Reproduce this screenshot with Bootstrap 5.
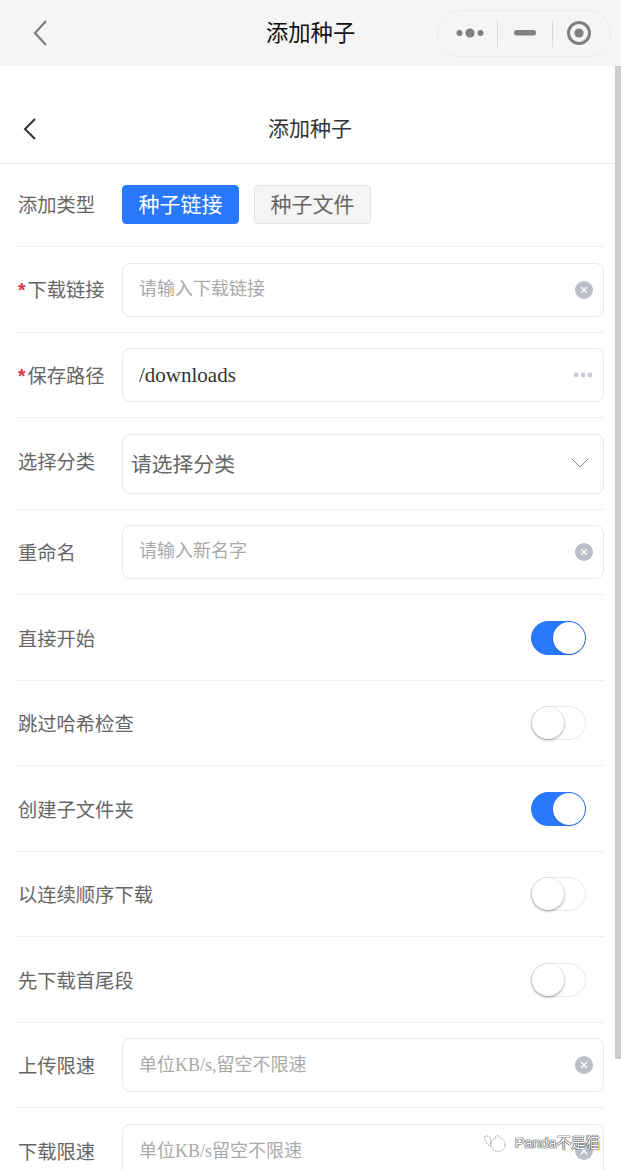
<!DOCTYPE html>
<html lang="zh-CN">
<head>
  <meta charset="UTF-8" />
  <meta name="viewport" content="width=device-width, initial-scale=1" />
  <title>添加种子</title>
  <link href="https://cdn.jsdelivr.net/npm/bootstrap@5.3.0/dist/css/bootstrap.min.css" rel="stylesheet" />
  <style>
    html, body {
      height: 1170px;
      overflow: hidden;
    }
    body {
      font-family: "Liberation Serif", "Noto Sans CJK SC", serif;
      background: #fff;
      position: relative;
    }
    .wx-bar {
      height: 66px;
      background: #f5f5f5;
      padding: 0 10px 0 32px;
    }
    .wx-title {
      font-family: "Noto Sans CJK SC", sans-serif;
      font-size: 22.3px;
      color: #111;
      margin-left: 218px;
      margin-top: -2px;
    }
    .wx-capsule {
      width: 174px;
      height: 47px;
      border: 1px solid #ebebeb;
      border-radius: 24px;
    }
    .wx-cell {
      height: 100%;
    }
    .wx-cell-more {
      width: 59px;
      padding-left: 4px;
    }
    .wx-cell-min {
      width: 54px;
    }
    .wx-cell-close {
      flex: 1 1 0;
      padding-right: 5px;
    }
    .wx-sep {
      width: 1px;
      height: 27px;
      background: #d9d9d9;
    }
    .scroll-track {
      width: 6px;
    }
    .scroll-thumb {
      height: 993px;
      background: #cdcdcd;
    }
    .page-nav {
      height: 98px;
      padding: 28px 0 0 22px;
      border-bottom: 1px solid #e8e8e8;
    }
    .page-title {
      font-family: "Noto Sans CJK SC", sans-serif;
      font-size: 21px;
      color: #333;
      margin-left: 230px;
      margin-top: -2px;
    }
    .form-area {
      padding: 0 11px 0 17px;
    }
    .field-row {
      padding: 16px 0;
      border-bottom: 1px solid #efefef;
    }
    .row-85 {
      height: 85px;
    }
    .row-86 {
      height: 86px;
    }
    .row-92 {
      height: 92px;
    }
    .field-label {
      font-family: "Noto Sans CJK SC", sans-serif;
      width: 105px;
      flex: none;
      padding-left: 1px;
      font-size: 19.3px;
      color: #666;
      white-space: nowrap;
    }
    .label-down {
      padding-top: 2px;
    }
    .label-up {
      padding-bottom: 4px;
    }
    .req {
      color: #d9363e;
      font-family: "Liberation Sans", sans-serif;
      font-weight: 700;
      margin-right: 2px;
    }
    .type-row {
      height: 83px;
      padding: 21px 0 0;
    }
    .type-btn {
      font-family: "Noto Sans CJK SC", sans-serif;
      width: 117px;
      height: 39px;
      padding: 0 0 2px;
      font-size: 21px;
      line-height: 35px;
      border-radius: 4px;
      margin-right: 15px;
    }
    .type-on {
      background: #2979ff;
      border-color: #2979ff;
      color: #fff;
    }
    .type-off {
      background: #f5f5f5;
      border-color: #e2e2e6;
      color: #666;
    }
    .text-box {
      height: 54px;
      flex: 1 1 0;
      border: 1px solid #e8e8e8;
      border-radius: 8px;
      padding: 0 10px 0 16px;
    }
    .text-box input {
      border: 0;
      outline: 0;
      flex: 1 1 0;
      min-width: 0;
      padding: 0;
      background: none;
      font-size: 21px;
      color: #333;
    }
    .text-box input::placeholder {
      font-size: 18px;
      color: #a9a9a9;
      opacity: 1;
    }
    .text-box input.input-down {
      padding-top: 2px;
    }
    .text-box input.input-up {
      padding-bottom: 2px;
    }
    .select-box {
      height: 60px;
      padding: 0 14px 0 8px;
      font-family: "Noto Sans CJK SC", sans-serif;
      font-size: 20.8px;
      color: #666;
    }
    .switch-row {
      padding: 0 18px 0 0;
    }
    .toggle {
      width: 55px;
      height: 34px;
      border-radius: 17px;
      position: relative;
      background: #fff;
      border: 1px solid #e8e8e8;
    }
    .toggle::after {
      content: "";
      position: absolute;
      top: 0;
      left: 0;
      width: 32px;
      height: 32px;
      border-radius: 50%;
      background: #fff;
      box-shadow: 0 1px 3px rgba(0, 0, 0, .4);
    }
    .toggle-on {
      background: #2979ff;
      border-color: #2979ff;
    }
    .toggle-on::after {
      left: 21px;
      box-shadow: 0 1px 2px rgba(0, 0, 0, .25);
    }
    .watermark {
      position: absolute;
      left: 483px;
      top: 1132px;
      font-family: "Liberation Sans", "Noto Sans CJK SC", sans-serif;
      font-size: 14.4px;
      line-height: 22px;
      color: #fff;
      text-shadow: 0 0 1px #222, 0 0 1px #222, 0 0 1px #222;
    }
  </style>
</head>
<body>

  <!-- WeChat title bar -->
  <div class="wx-bar d-flex align-items-center">
    <svg width="16" height="28" viewBox="0 0 16 28" fill="none" stroke="#7d7d7d" stroke-width="2.2"><path d="M14 2 3 14l11 12"/></svg>
    <span class="wx-title flex-grow-1">添加种子</span>
    <div class="wx-capsule d-flex align-items-center">
      <div class="wx-cell wx-cell-more d-flex align-items-center justify-content-center">
        <svg width="28" height="10" viewBox="0 0 28 10" fill="#808080"><circle cx="3.5" cy="5" r="3"/><circle cx="14" cy="5" r="4.6"/><circle cx="24.5" cy="5" r="3"/></svg>
      </div>
      <div class="wx-sep"></div>
      <div class="wx-cell wx-cell-min d-flex align-items-center justify-content-center">
        <svg width="22" height="6" viewBox="0 0 22 6"><rect y="0" width="22" height="5.5" rx="2.7" fill="#808080"/></svg>
      </div>
      <div class="wx-sep"></div>
      <div class="wx-cell wx-cell-close d-flex align-items-center justify-content-center">
        <svg width="26" height="26" viewBox="0 0 26 26"><circle cx="13" cy="13" r="10.5" fill="none" stroke="#808080" stroke-width="3"/><circle cx="13" cy="13" r="4.6" fill="#808080"/></svg>
      </div>
    </div>
  </div>

  <div class="d-flex">
    <main class="flex-grow-1">
      <div class="page-nav d-flex align-items-center">
        <svg width="16" height="24" viewBox="0 0 16 24" fill="none" stroke="#333" stroke-width="2"><path d="M13 2 3 12l10 10"/></svg>
        <span class="page-title">添加种子</span>
      </div>

      <div class="form-area">
        <div class="field-row type-row d-flex align-items-start">
          <span class="field-label lh-lg">添加类型</span>
          <button class="btn type-btn type-on">种子链接</button>
          <button class="btn type-btn type-off">种子文件</button>
        </div>

        <div class="field-row row-86 d-flex align-items-center">
          <span class="field-label label-down"><span class="req">*</span>下载链接</span>
          <div class="text-box d-flex align-items-center">
            <input class="input-up" type="text" placeholder="请输入下载链接" />
            <svg width="18" height="18" viewBox="0 0 18 18"><circle cx="9" cy="9" r="9" fill="#b9c0cc"/><path d="M6 6l6 6M12 6l-6 6" stroke="#fff" stroke-width="1.4"/></svg>
          </div>
        </div>

        <div class="field-row row-85 d-flex align-items-center">
          <span class="field-label label-down"><span class="req">*</span>保存路径</span>
          <div class="text-box d-flex align-items-center">
            <input class="input-down" type="text" value="/downloads" />
            <svg width="20" height="6" viewBox="0 0 20 6" fill="#c5cad3"><circle cx="3" cy="3" r="2.4"/><circle cx="10" cy="3" r="2.4"/><circle cx="17" cy="3" r="2.4"/></svg>
          </div>
        </div>

        <div class="field-row row-92 d-flex align-items-center">
          <span class="field-label label-up">选择分类</span>
          <div class="text-box select-box d-flex align-items-center justify-content-between">
            <span>请选择分类</span>
            <svg width="18" height="11" viewBox="0 0 18 11" fill="none" stroke="#8a8a8a" stroke-width="1"><path d="M1 1l8 8 8-8"/></svg>
          </div>
        </div>

        <div class="field-row row-85 d-flex align-items-center">
          <span class="field-label">重命名</span>
          <div class="text-box d-flex align-items-center">
            <input class="input-up" type="text" placeholder="请输入新名字" />
            <svg width="18" height="18" viewBox="0 0 18 18"><circle cx="9" cy="9" r="9" fill="#b9c0cc"/><path d="M6 6l6 6M12 6l-6 6" stroke="#fff" stroke-width="1.4"/></svg>
          </div>
        </div>

        <div class="field-row switch-row row-86 d-flex align-items-center justify-content-between">
          <span class="field-label label-down">直接开始</span>
          <span class="toggle toggle-on"></span>
        </div>
        <div class="field-row switch-row row-85 d-flex align-items-center justify-content-between">
          <span class="field-label">跳过哈希检查</span>
          <span class="toggle"></span>
        </div>
        <div class="field-row switch-row row-86 d-flex align-items-center justify-content-between">
          <span class="field-label label-down">创建子文件夹</span>
          <span class="toggle toggle-on"></span>
        </div>
        <div class="field-row switch-row row-85 d-flex align-items-center justify-content-between">
          <span class="field-label">以连续顺序下载</span>
          <span class="toggle"></span>
        </div>
        <div class="field-row switch-row row-86 d-flex align-items-center justify-content-between">
          <span class="field-label label-down">先下载首尾段</span>
          <span class="toggle"></span>
        </div>

        <div class="field-row row-85 d-flex align-items-center">
          <span class="field-label">上传限速</span>
          <div class="text-box d-flex align-items-center">
            <input type="text" placeholder="单位KB/s,留空不限速" />
            <svg width="18" height="18" viewBox="0 0 18 18"><circle cx="9" cy="9" r="9" fill="#b9c0cc"/><path d="M6 6l6 6M12 6l-6 6" stroke="#fff" stroke-width="1.4"/></svg>
          </div>
        </div>

        <div class="field-row row-86 d-flex align-items-center">
          <span class="field-label label-down">下载限速</span>
          <div class="text-box d-flex align-items-center">
            <input type="text" placeholder="单位KB/s留空不限速" />
            <svg width="18" height="18" viewBox="0 0 18 18"><circle cx="9" cy="9" r="9" fill="#b9c0cc"/><path d="M6 6l6 6M12 6l-6 6" stroke="#fff" stroke-width="1.4"/></svg>
          </div>
        </div>
      </div>
    </main>
    <aside class="scroll-track flex-shrink-0">
      <div class="scroll-thumb"></div>
    </aside>
  </div>

  <!-- watermark over the last row -->
  <div class="watermark d-flex align-items-center gap-2">
    <svg width="24" height="18" viewBox="0 0 24 18" fill="#fff" stroke="#777" stroke-width=".7" stroke-dasharray="1.5 1"><path d="M1 3c3-2 5-1 7 2-1 3-1 5 0 7-3 0-5-3-7-9Z"/><circle cx="15" cy="10.500" r="7"/><path d="M12 3.500l3-2.500 2 3"/></svg>
    <span>Panda不是猫</span>
  </div>

  <script src="https://cdn.jsdelivr.net/npm/bootstrap@5.3.0/dist/js/bootstrap.bundle.min.js"></script>
</body>
</html>
